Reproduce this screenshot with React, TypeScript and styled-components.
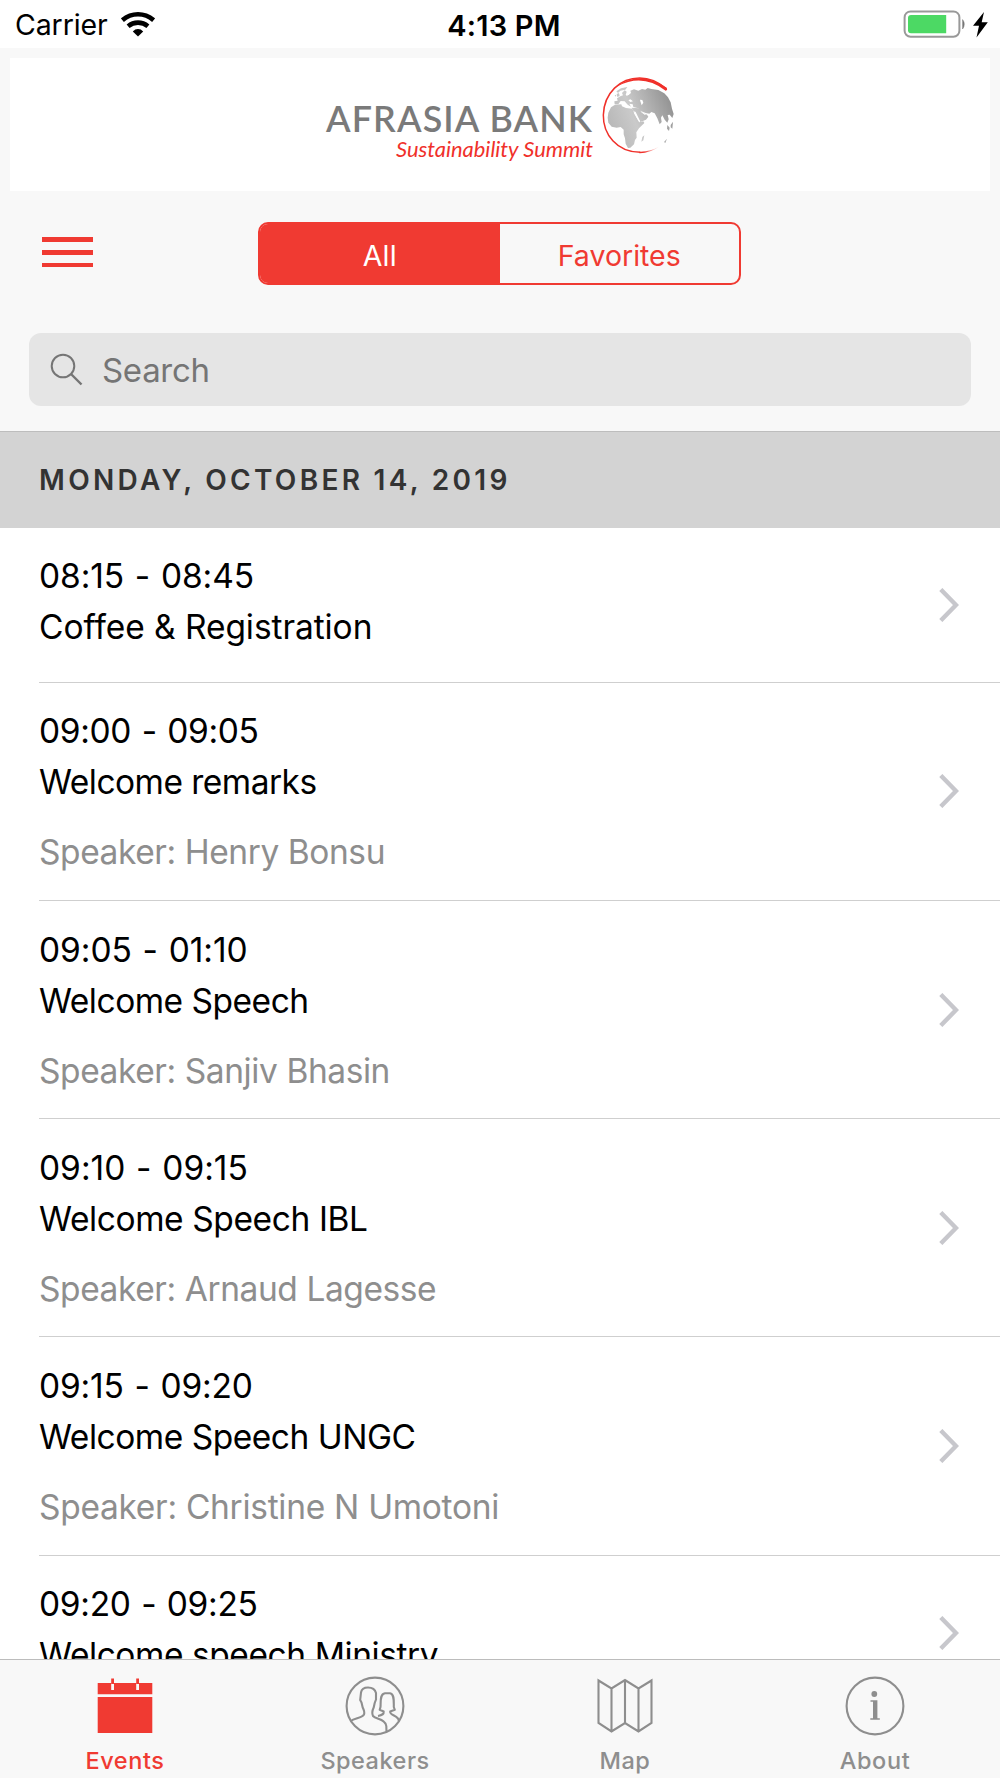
import React from "react";
import styled, { createGlobalStyle } from "styled-components";

const RED = "#f03a32";
const GRAY = "#8e8e8e";

const GlobalStyle = createGlobalStyle`
  * { box-sizing: border-box; }
  body { margin: 0; background: #fff; font-family: Inter, Roboto, sans-serif; }
  svg { display: block; flex: none; }
`;

const Screen = styled.div`
  width: 1000px;
  height: 1778px;
  display: flex;
  flex-direction: column;
  overflow: hidden;
  background: #fff;
`;

const StatusBar = styled.div`
  height: 48px;
  flex: none;
  display: grid;
  grid-template-columns: 1fr auto 1fr;
  align-items: start;
  padding: 0 12px 0 15px;
  color: #000;
`;

const StatusGroup = styled.div<{ $end?: boolean }>`
  display: flex;
  align-items: center;
  justify-content: ${(p) => (p.$end ? "flex-end" : "flex-start")};
  height: 48px;
`;

const Carrier = styled.span`
  font-size: 28.5px;
  letter-spacing: -0.1px;
  line-height: 48px;
  padding-top: 2px;
  margin-right: 13px;
`;

const Clock = styled.span`
  font-size: 29px;
  font-weight: 600;
  letter-spacing: 0.2px;
  line-height: 48px;
  padding: 2px 0 0 5px;
`;

const StatusIcon = styled.span`
  margin-top: 0;
`;

const Header = styled.header`
  height: 383px;
  flex: none;
  background: #f8f8f8;
  padding-top: 10px;
`;

const LogoCard = styled.div`
  height: 133px;
  margin: 0 10px;
  padding: 7px 0 0 310px;
  background: #fff;
`;

const Toolbar = styled.div`
  display: grid;
  grid-template-columns: 216px 483px 1fr;
  align-items: start;
  margin: 31px 0 0 42px;
`;

const MenuButton = styled.div`
  width: 51px;
  display: flex;
  flex-direction: column;
  gap: 8.3px;
  margin-top: 15.3px;
`;

const MenuBar = styled.span`
  height: 4.5px;
  background: ${RED};
`;

const Segments = styled.div`
  height: 63px;
  display: grid;
  grid-template-columns: 1fr 1fr;
  border: 2px solid ${RED};
  border-radius: 10px;
  overflow: hidden;
`;

const Segment = styled.div<{ $active?: boolean }>`
  background: ${(p) => (p.$active ? RED : "transparent")};
  color: ${(p) => (p.$active ? "#fff" : RED)};
  font-size: 28.5px;
  letter-spacing: ${(p) => (p.$active ? "0.2px" : "0")};
  line-height: 63px;
  text-align: center;
`;

const SearchField = styled.div`
  height: 73px;
  margin: 48px 29px 0;
  padding: 1px 0 0 21px;
  display: flex;
  align-items: center;
  border-radius: 12px;
  background: #e5e5e5;
  color: #757575;
  font-size: 33px;
  letter-spacing: -0.3px;
  line-height: 72px;
`;

const SearchLabel = styled.span`
  margin-left: 18px;
`;

const DayHeading = styled.div`
  height: 96.5px;
  flex: none;
  border-top: 1px solid #bdbdbd;
  background: #d3d3d3;
  padding-left: 39px;
  color: #333;
  font-size: 28px;
  font-weight: 600;
  letter-spacing: 3.3px;
  line-height: 96px;
`;

const EventList = styled.main`
  flex: 1;
  min-height: 0;
  overflow: hidden;
`;

const EventRow = styled.article<{ $short?: boolean }>`
  height: ${(p) => (p.$short ? 155 : 218.25)}px;
  margin-left: 39px;
  padding: 23.8px 41px 0 0;
  border-bottom: 1px solid #cfcfcf;
  display: grid;
  grid-template-columns: 1fr auto;
`;

const EventText = styled.div`
  font-size: 33.5px;
  line-height: 51px;
  color: #000;
  white-space: nowrap;
`;

const Time = styled.div<{ $tracking: number }>`
  letter-spacing: ${(p) => p.$tracking}px;
  word-spacing: 1.4px;
`;

const Title = styled.div<{ $tracking: number }>`
  letter-spacing: ${(p) => p.$tracking}px;
`;

const Speaker = styled.div<{ $tracking?: number }>`
  margin-top: 19px;
  letter-spacing: ${(p) => p.$tracking ?? -0.42}px;
  color: ${GRAY};
`;

const ChevronSlot = styled.div`
  align-self: center;
  margin-top: -23.5px;
`;

const TabBar = styled.nav`
  height: 119.5px;
  flex: none;
  display: grid;
  grid-template-columns: repeat(4, 1fr);
  border-top: 1px solid #bcbcbc;
  background: #f8f8f8;
`;

const Tab = styled.div<{ $active?: boolean }>`
  display: flex;
  flex-direction: column;
  align-items: center;
  padding-top: 16px;
  color: ${(p) => (p.$active ? RED : GRAY)};
`;

const TabLabel = styled.span<{ $spacing: number }>`
  margin-top: 9px;
  font-size: 23.5px;
  font-weight: 500;
  line-height: 32px;
  letter-spacing: ${(p) => p.$spacing}px;
`;

const WifiIcon = () => (
  <svg width="34" height="25" viewBox="0 0 34 25" fill="none" stroke="#000" strokeWidth="4.6">
    <path d="M1.4 8.2Q8.4 2.3 17 2.3T32.6 8.2" />
    <path d="M7.1 14.2Q11.4 10.6 17 10.6T26.9 14.2" />
    <path d="M17 24.5 11.8 19.4Q14 17 17 17T22.2 19.4Z" fill="#000" stroke="none" />
  </svg>
);

const BatteryIcon = () => (
  <svg width="85" height="29" viewBox="0 0 85 29">
    <rect x="1.6" y="1.4" width="54.8" height="25.4" rx="6" fill="none" stroke="#999" strokeWidth="2" />
    <path d="M8 5H43.2V23.2H8Q5 23.2 5 20.2V8Q5 5 8 5Z" fill="#4cd964" />
    <path d="M59.6 9.6Q63 14.2 59.6 19Z" fill="#777" stroke="#777" strokeWidth="0.5" />
    <path d="M81 2 70 15.8H76L73.5 27.5 84.8 12.2H78.7Z" fill="#000" />
  </svg>
);

const Logo = () => (
  <svg width="370" height="110" viewBox="0 0 370 110">
    <defs>
      <linearGradient id="land" gradientUnits="userSpaceOnUse" x1="60" y1="190" x2="240" y2="120">
        <stop offset="0" stopColor="#b8b8b8" />
        <stop offset="0.4" stopColor="#cacaca" />
        <stop offset="1" stopColor="#969696" />
      </linearGradient>
      <linearGradient id="ring" x1="0" y1="0" x2="1" y2="0">
        <stop offset="0.2" stopColor="#f0302a" />
        <stop offset="1" stopColor="#f0302a" stopOpacity="0" />
      </linearGradient>
    </defs>
    <text x="6" y="66.7" fontFamily="Lato, sans-serif" fontWeight="600" fontSize="35.8" fill="#7a7a7a" textLength="266" lengthAdjust="spacing">AFRASIA BANK</text>
    <text x="76" y="91.5" fontFamily="Lato, cursive" fontStyle="italic" fontSize="22" fill="#f0302a" textLength="197" lengthAdjust="spacingAndGlyphs">Sustainability Summit</text>
    <g transform="translate(270 0) scale(.33333)">
      <g fill="url(#land)">
        <path d="M63 127 75 119 94 118 96 124 108 129 127 131 132 143 140 158 148 172 160 169 163 174 147 190 139 202 140 218 135 225 132 238 121 248 114 249 107 236 105 220 101 208 101 194 92 186 80 188 65 185 55 173 53 158 55 143Z" />
        <path d="M74 118 73 109 83 107 81 100 91 94 99 91 96 84 104 76 110 80 107 90 114 91 123 84 121 77 132 73 145 77 156 72 166 74 173 69 184 72 205 75 223 85 234 97 242 112 246 131 251 147 247 159 239 149 233 150 236 163 232 173 224 164 217 151 213 158 215 171 209 178 202 160 194 145 184 141 178 146 167 144 159 141 149 135 145 130 130 126 128 118 118 116 123 125 113 119 104 109 92 108 85 118Z" />
        <path d="M125 128 147 130 159 143 171 149 175 155 168 164 151 171 145 161 137 151Z" />
        <path d="M79 79 93 70 112 66 106 74 91 77 84 84ZM80 87 87 84 89 93 82 96ZM74 91 79 90 77 95ZM157 216 163 211 160 226 154 230ZM232 180 239 188 237 198 231 191ZM242 180 249 170 247 191 242 187ZM222 231 231 221 226 234Z" />
      </g>
      <g fill="#fff">
        <path d="M115 106 121 103 129 109 121 111ZM150 104 157 105 160 113 155 121 151 109ZM116 84 121 80 117 89 108 93 111 88Z" />
        <path d="M133 139 137 141 150 168 147 170 132 145ZM151 137 160 143 168 147 165 150 154 142Z" />
      </g>
      <path d="M151 262C80 262 39 207 40 150 42 83 91 39 149 39Q192 39 228 71" fill="none" stroke="#f0302a" strokeWidth="4.5" />
      <path d="M148 260Q181 261 209 244 181 265 148 264.5Z" fill="url(#ring)" />
      <path d="M82 62Q151 14 230 68Q234 75 227 77 158 23 82 64Z" fill="#f0302a" />
    </g>
  </svg>
);

const SearchIcon = () => (
  <svg width="34" height="34" viewBox="0 0 34 34" fill="none" stroke="#757575" strokeWidth="2">
    <circle cx="13" cy="13" r="11.3" />
    <path d="m21 21 10.5 10.5" strokeWidth="2.4" />
  </svg>
);

const Chevron = () => (
  <svg width="20" height="34" viewBox="0 0 20 34" fill="none" stroke="#c7c7cc" strokeWidth="4.4">
    <path d="M1.8 1.5 17 17 1.8 32.5" />
  </svg>
);

const EventsIcon = () => (
  <svg width="60" height="60" viewBox="0 0 60 60" fill="currentColor">
    <path d="M2.7 7H57.3V18.2H2.7ZM2.7 21H57.3V57H2.7Z" />
    <path d="M16.2 7h2.8v7h-2.8zM41.2 7H44v7h-2.8z" fill="#f8f8f8" />
    <path d="M16.2 2.5h2.8V8h-2.8zM41.2 2.5H44V8h-2.8z" />
  </svg>
);

const SpeakersIcon = () => (
  <svg width="60" height="60" viewBox="0 0 60 60" fill="none" stroke="currentColor" strokeWidth="2.1" strokeLinejoin="round">
    <circle cx="30" cy="30" r="28.4" />
    <path d="M5.7 45C10 42 17 42 19 38.5 20 36 19 34 17.7 31.5L16.5 26.5 15.2 24 16 16.5C16.6 13 19.5 11.5 23 11.5S30 13 31 17L31 23.5 29.7 27 28.7 31.5C27 35 26.8 37.5 28 40 31 43.5 40.5 43 41.3 50L41.5 55.5" />
    <path d="M33 40C36 39.5 39 38.5 38.7 35.5L34.7 33.8 35.5 31C36 26 34.5 18 40 17.2H45C49.5 18 48.8 25 48.8 31L49.8 33.8 45.2 35.5C44.5 40 54 39 53.8 45" />
  </svg>
);

const MapIcon = () => (
  <svg width="60" height="60" viewBox="0 0 60 60" fill="none" stroke="currentColor" strokeWidth="2.1">
    <path d="M3.5 4.5 16.5 12.5 30 4 43.5 12.5 56.5 4.5V47L43.5 55.5 30 47 16.5 55.5 3.5 47ZM16.5 12.5V55.5M30 4V47M43.5 12.5V55.5" />
  </svg>
);

const AboutIcon = () => (
  <svg width="60" height="60" viewBox="0 0 60 60">
    <circle cx="30" cy="30" r="28.4" fill="none" stroke="currentColor" strokeWidth="2.1" />
    <circle cx="29.3" cy="18" r="2.9" fill="currentColor" />
    <path d="M25.5 24.3H32.4V42.3H34.8V43.8H25.3V42.3H28V25.8H25.5Z" fill="currentColor" />
  </svg>
);

interface EventItem {
  time: string;
  timeTracking: number;
  title: string;
  titleTracking: number;
  speaker?: string;
  speakerTracking?: number;
}

const EVENTS: EventItem[] = [
  { time: "08:15 - 08:45", timeTracking: -0.08, title: "Coffee & Registration", titleTracking: -0.07 },
  { time: "09:00 - 09:05", timeTracking: -0.33, title: "Welcome remarks", titleTracking: -0.52, speaker: "Henry Bonsu" },
  { time: "09:05 - 01:10", timeTracking: -0.05, title: "Welcome Speech", titleTracking: -0.49, speaker: "Sanjiv Bhasin" },
  { time: "09:10 - 09:15", timeTracking: -0.01, title: "Welcome Speech IBL", titleTracking: -0.4, speaker: "Arnaud Lagesse" },
  { time: "09:15 - 09:20", timeTracking: -0.15, title: "Welcome Speech UNGC", titleTracking: -0.48, speaker: "Christine N Umotoni", speakerTracking: -0.29 },
  { time: "09:20 - 09:25", timeTracking: -0.3, title: "Welcome speech Ministry", titleTracking: -0.43 },
];

const TABS = [
  { label: "Events", Icon: EventsIcon, spacing: 0.6 },
  { label: "Speakers", Icon: SpeakersIcon, spacing: 0.5 },
  { label: "Map", Icon: MapIcon, spacing: 0.5 },
  { label: "About", Icon: AboutIcon, spacing: 0.6 },
];

export default function App() {
  return (
    <Screen>
      <GlobalStyle />
      <StatusBar>
        <StatusGroup>
          <Carrier>Carrier</Carrier>
          <StatusIcon>
            <WifiIcon />
          </StatusIcon>
        </StatusGroup>
        <Clock>4:13 PM</Clock>
        <StatusGroup $end>
          <StatusIcon>
            <BatteryIcon />
          </StatusIcon>
        </StatusGroup>
      </StatusBar>
      <Header>
        <LogoCard>
          <Logo />
        </LogoCard>
        <Toolbar>
          <MenuButton>
            <MenuBar />
            <MenuBar />
            <MenuBar />
          </MenuButton>
          <Segments>
            <Segment $active>All</Segment>
            <Segment>Favorites</Segment>
          </Segments>
        </Toolbar>
        <SearchField>
          <SearchIcon />
          <SearchLabel>Search</SearchLabel>
        </SearchField>
      </Header>
      <DayHeading>MONDAY, OCTOBER 14, 2019</DayHeading>
      <EventList>
        {EVENTS.map((event) => (
          <EventRow key={event.time} $short={!event.speaker}>
            <EventText>
              <Time $tracking={event.timeTracking}>{event.time}</Time>
              <Title $tracking={event.titleTracking}>{event.title}</Title>
              {event.speaker && (
                <Speaker $tracking={event.speakerTracking}>Speaker: {event.speaker}</Speaker>
              )}
            </EventText>
            <ChevronSlot>
              <Chevron />
            </ChevronSlot>
          </EventRow>
        ))}
      </EventList>
      <TabBar>
        {TABS.map(({ label, Icon, spacing }, i) => (
          <Tab key={label} $active={i === 0}>
            <Icon />
            <TabLabel $spacing={spacing}>{label}</TabLabel>
          </Tab>
        ))}
      </TabBar>
    </Screen>
  );
}
